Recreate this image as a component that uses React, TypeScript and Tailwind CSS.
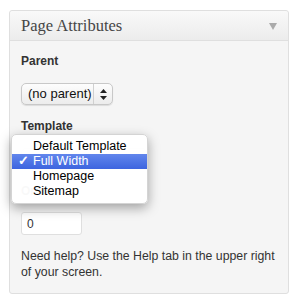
import React from "react";

const sans = { fontFamily: '"Liberation Sans", Arial, Helvetica, sans-serif' };

export default function App() {
  return (
    <div className="w-[299px] h-[305px] bg-white pt-[10px] pl-[9px]" style={sans}>
      <div className="relative w-[280px] h-[284px] border border-[#dfdfdf] rounded-[3px] bg-[#f5f5f5] text-[#333]">
        {/* header */}
        <div className="h-[30px] border-b border-[#dfdfdf] rounded-t-[3px] bg-gradient-to-b from-[#f9f9f9] to-[#ececec] flex items-center justify-between pl-[11px] pr-[11px]">
          <span
            className="text-[16.5px] leading-[30px] text-[#464646]"
            style={{ fontFamily: '"Liberation Serif", Georgia, serif' }}
          >
            Page Attributes
          </span>
          <svg width="8" height="8" viewBox="0 0 8 8" className="mt-[1px]">
            <polygon points="0,1 8,1 4,8" fill="#aaaaaa" />
          </svg>
        </div>
        {/* body */}
        <div className="px-[11px] pt-[12px] flex flex-col items-start">
          <div className="text-[12px] leading-[16px] font-bold">Parent</div>
          <div className="mt-[14px] h-[22px] w-[92px] rounded-[5px] border border-[#c8c8c8] bg-gradient-to-b from-[#fdfdfd] to-[#ececec] shadow-[0_1px_1px_rgba(0,0,0,0.1)] flex items-stretch text-[13px] text-[#111]">
            <div className="flex-1 flex items-center pl-[6px]">(no parent)</div>
            <div className="w-[19px] border-l border-[#d0d0d0] flex items-center justify-center">
              <svg width="7" height="11" viewBox="0 0 7 11">
                <polygon points="3.5,0 7,4 0,4" fill="#222" />
                <polygon points="0,7 7,7 3.5,11" fill="#222" />
              </svg>
            </div>
          </div>
          <div className="mt-[13px] text-[12px] leading-[16px] font-bold">Template</div>
          <div className="mt-[14px] h-[22px] w-[126px] rounded-[5px] border border-[#c8c8c8] bg-gradient-to-b from-[#fdfdfd] to-[#ececec]" />
          <div className="mt-[13px] text-[12px] leading-[16px] font-bold">Order</div>
          <div className="mt-[13px] h-[23px] w-[61px] rounded-[3px] border border-[#dfdfdf] bg-white flex items-center pl-[5px] text-[12px] text-[#333]">
            0
          </div>
          <p className="mt-[13px] text-[12.3px] leading-[16px] text-[#333] whitespace-nowrap">
            Need help? Use the Help tab in the upper right
            <br />
            of your screen.
          </p>
        </div>
        {/* popup menu */}
        <div className="absolute left-[1px] top-[123px] w-[137px] h-[70px] rounded-[5px] bg-white/[0.97] shadow-[0_4px_12px_rgba(0,0,0,0.35)] border border-[#d4d4d4] py-[4px] text-[12.5px] leading-[15px] text-black">
          <div className="h-[15px] pl-[21px]">Default Template</div>
          <div className="h-[15px] pl-[21px] relative text-white bg-gradient-to-b from-[#6286ec] to-[#3d64df]">
            <span className="absolute left-[6px] top-0 font-bold">✓</span>
            Full Width
          </div>
          <div className="h-[15px] pl-[21px]">Homepage</div>
          <div className="h-[15px] pl-[21px]">Sitemap</div>
        </div>
      </div>
    </div>
  );
}
